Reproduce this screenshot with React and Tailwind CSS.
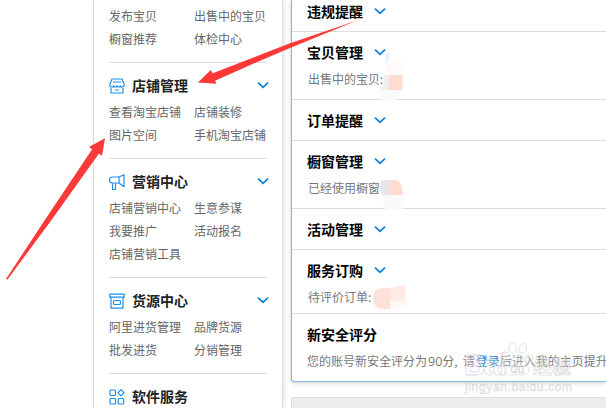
import React from 'react';

function Chevron({ className = '' }) {
  return (
    <svg className={className} width="12" height="8" viewBox="0 0 12 8" fill="none" stroke="#0a82d8" strokeWidth="1.8">
      <path d="M1 1.700 L6 6.300 L11 1.700" />
    </svg>
  );
}

const icons = {
  shop: (
    <>
      <path d="M3 1h10l2.200 5.500c0 1.700-.8 2.500-2 2.500s-1.900-.7-1.900-1.500c0 1-.7 1.500-1.600 1.500S8 8.400 8 7.500C8 8.400 7.200 9 6.300 9S4.700 8.400 4.700 7.500C4.700 8.400 4 9 2.800 9S.8 8.200.8 6.500z" />
      <path d="M4 4h8M2 10v5h12v-5M6 12h4" />
    </>
  ),
  horn: (
    <>
      <path d="M10 3H3.500a2.900 2.900 0 0 0 0 6H10" />
      <path d="M15 .8v12L10 9V3zM3.500 9.300v6.200h3V9.300" />
    </>
  ),
  box: (
    <>
      <path d="M.8 1.200h14.400v3H.8zM2 4.500v10.700h12V4.500" />
      <rect x="4.500" y="7.500" width="7" height="4" rx="1" />
    </>
  ),
  apps: (
    <>
      <rect x="1" y="1" width="5.500" height="5.500" rx="1" />
      <path d="M12 .6l3.100 3.100L12 6.800 8.900 3.700z" />
      <rect x="1" y="9.500" width="5.500" height="5.500" rx="1" />
      <rect x="9.200" y="9.500" width="5.500" height="5.500" rx="1" />
    </>
  ),
};

function Icon({ name }) {
  return (
    <svg className="mt-[2px]" width="16" height="16" viewBox="0 0 16 16" fill="none" stroke="#1e90e8" strokeWidth="1.2" strokeLinejoin="round">
      {icons[name]}
    </svg>
  );
}

function MenuSection({ icon, title, items = [] }) {
  return (
    <section className="border-t border-[#ddd] pt-[12px] pb-[12px]">
      <h2 className="mb-[5px] flex h-5 items-center text-[14px] font-bold text-[#222]">
        <Icon name={icon} />
        <span className="ml-[7px]">{title}</span>
        <Chevron className="mr-[-2px] ml-auto" />
      </h2>
      <Links items={items} />
    </section>
  );
}

function Links({ items }) {
  return (
    <div className="grid grid-cols-[85px_1fr] text-[12px] leading-[23px] text-[#666]">
      {items.map((t) => (
        <span key={t} className="whitespace-nowrap">{t}</span>
      ))}
    </div>
  );
}

function Notice({ title, arrow = true, children, pad = 'pb-[13px]', last = false }) {
  return (
    <section className={`pl-[15px] ${last ? '' : 'border-b border-[#ddd]'} ${children ? pad : ''}`}>
      <h2 className="flex h-10 items-center text-[14px] font-bold text-black">
        {title}
        {arrow && <Chevron className="ml-[11px]" />}
      </h2>
      {children && (
        <p className="relative -mt-px h-[15px] pl-px text-[12px] leading-[15px] whitespace-nowrap text-[#777]">{children}</p>
      )}
    </section>
  );
}

function Watermark() {
  return (
    <svg className="absolute top-[338px] left-[460px]" width="120" height="60" viewBox="0 0 120 60">
      <g fill="#fff" fillOpacity=".3" stroke="#d0d0d0" strokeOpacity=".75" strokeWidth=".8">
        <text x="4" y="37" fontSize="29" fontWeight="bold" fontFamily="Liberation Sans, sans-serif" textLength="43">Bai</text>
        <ellipse cx="52.500" cy="10" rx="3.700" ry="5" />
        <ellipse cx="63" cy="10.500" rx="3.700" ry="5" transform="rotate(12 63 10.500)" />
        <ellipse cx="46" cy="18.500" rx="3.500" ry="4.800" transform="rotate(-15 46 18.500)" />
        <ellipse cx="69" cy="21" rx="3.500" ry="4.800" />
        <path d="M57.500 17c4 0 5 4 8.500 8 4 4 4.500 12-3 12-4 0-7-.8-11 0-7 1-8-6-4-10 4-3 5-10 9.500-10z" />
        <text x="50" y="35" fontSize="13" fontFamily="Liberation Sans, sans-serif">du</text>
        <text x="73" y="36" fontSize="19" fontWeight="bold" fontFamily="Noto Sans CJK SC, sans-serif">经验</text>
        <text x="5" y="53" fontSize="12" strokeWidth=".6" fontFamily="Liberation Sans, sans-serif" textLength="107">jingyan.baidu.com</text>
      </g>
    </svg>
  );
}

export default function App() {
  return (
    <div className="relative flex h-[408px] w-[606px] overflow-hidden bg-white font-['Noto_Sans_CJK_SC',sans-serif]">
      <aside className="ml-[93px] h-[408px] w-[190px] shrink-0 border-r border-l border-[#ddd] pr-[15px] pl-[15px] shadow-[1px_0_4px_rgba(0,0,0,0.12)]">
        <div className="h-[62px] pt-[4px]">
          <Links items={['发布宝贝', '出售中的宝贝', '橱窗推荐', '体检中心']} />
        </div>
        <MenuSection icon="shop" title="店铺管理" items={['查看淘宝店铺', '店铺装修', '图片空间', '手机淘宝店铺']} />
        <MenuSection icon="horn" title="营销中心" items={['店铺营销中心', '生意参谋', '我要推广', '活动报名', '店铺营销工具']} />
        <MenuSection icon="box" title="货源中心" items={['阿里进货管理', '品牌货源', '批发进货', '分销管理']} />
        <section className="border-t border-[#ddd] pt-[12px]">
          <h2 className="flex h-5 items-center text-[14px] font-bold text-[#222]">
            <Icon name="apps" />
            <span className="ml-[7px]">软件服务</span>
          </h2>
        </section>
      </aside>

      <main className="ml-2 flex min-w-0 flex-1 flex-col">
        <div className="h-[382px] shrink-0 rounded-bl-[3px] border-b border-l border-[#7fbce8] shadow-[0_1px_4px_rgba(0,0,0,0.2)]">
          <div className="-mt-[9px]">
            <Notice title="违规提醒" />
            <Notice title="宝贝管理">
              出售中的宝贝:
              <svg className="absolute -top-[22px] left-[71px]" width="28" height="54" viewBox="0 0 28 54">
                <path d="M7 15Q7 8 9 4l2-2v13H7z" fill="#e4f1fc" />
                <path d="M8 12h17v15H8z" fill="#fdfaf9" />
                <path d="M6 26h5v15H2v-3h4z" fill="#f3eeed" />
                <path d="M11 26h14l-1 15H11z" fill="#ffdbd1" />
                <path d="M1 41h22q-3 12-13 12T1 41z" fill="#fafafa" />
              </svg>
            </Notice>
            <Notice title="订单提醒" />
            <Notice title="橱窗管理">
              已经使用橱窗
              <svg className="absolute top-0 left-[72px]" width="26" height="30" viewBox="0 0 26 30">
                <path d="M2 0h9v15H3Q0 8 2 0z" fill="#e8e6e6" />
                <path d="M11 0h7q5 2 6 15H11z" fill="#ffdbd1" />
                <path d="M3 15h21v14H6z" fill="#fafafa" />
              </svg>
            </Notice>
            <Notice title="活动管理" />
            <Notice title="服务订购" pad="pb-[9px]">
              待评价订单:
              <svg className="absolute -top-[4px] left-[66px]" width="38" height="26" viewBox="0 0 38 26">
                <path d="M0 12Q1 3 10 3h7v21H8Q0 22 0 12z" fill="#ffe1da" />
                <path d="M17 3Q25 0 32 0v16H17z" fill="#ffeae6" />
                <path d="M17 16h20q-6 5-20 8z" fill="#fdf7f5" />
              </svg>
            </Notice>
            <Notice title="新安全评分" arrow={false} last>
              <span className="-ml-px">您的账号新安全评分为</span>
              <span className="ml-px font-['Open_Sans'] text-[12.5px]">90</span>分,
              <span className="ml-[5px]">请<span className="ml-px text-[#0a82d8]">登录</span>后进入我的主页提升</span>
            </Notice>
          </div>
        </div>
        <div className="mt-[15px] h-[11px] rounded-tl-[2px] border-t border-l border-[#ddd] bg-[#ebecee]" />
      </main>

      <svg className="absolute inset-0" width="606" height="408" viewBox="0 0 606 408" fill="#fb3939">
        <path d="M357 20.500 L290 43.300 L212.700 73.300 L210.700 70 L198 82.500 L216.500 83.700 L215 80.700 L256.700 62.300 L290 48z" />
        <path d="M105 138.300 L89.300 146.700 L92 149.500 L45.500 219 L6 279 L7.500 279.500 L51.500 220 L99 153.500 L102 155.700z" />
      </svg>
      <Watermark />
    </div>
  );
}
